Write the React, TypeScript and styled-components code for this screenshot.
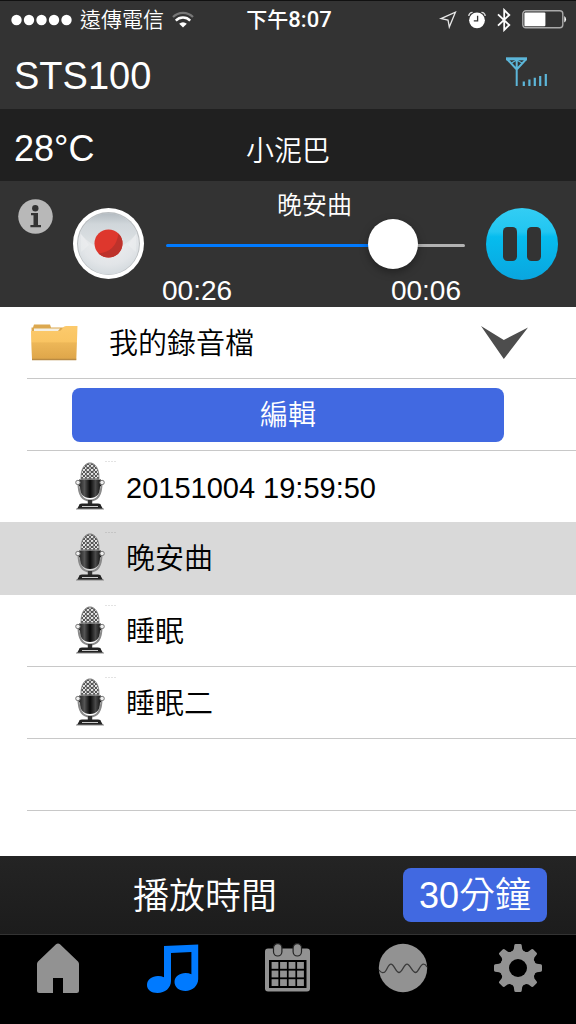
import React, { useState } from 'react';
import styled, { createGlobalStyle } from 'styled-components';

const GlobalStyle = createGlobalStyle`
  * { box-sizing: border-box; }
  body { margin: 0; background: #fff; }
  body, button, input {
    font-family: "Liberation Sans", "Noto Sans CJK TC", sans-serif;
    font-weight: 350;
  }
  button { border: 0; padding: 0; background: none; color: inherit; cursor: pointer; }
  svg { display: block; flex: none; }
`;

const Page = styled.div`
  min-height: 100vh;
  display: flex;
  flex-direction: column;
  color: #fff;
`;

const StatusBar = styled.div`
  display: grid;
  grid-template-columns: 1fr auto 1fr;
  align-items: center;
  height: 38px;
  padding: 0 9px 0 11px;
  border-top: 1px solid #111;
  background: #333;
  font-size: 21px;
  line-height: 36px;
`;

const StatusGroup = styled.div<{ $end?: boolean }>`
  display: flex;
  align-items: center;
  justify-content: ${p => (p.$end ? 'flex-end' : 'flex-start')};
  gap: ${p => (p.$end ? 11 : 8)}px;
`;

const Clock = styled.time`
  font-weight: 500;
  b { font-family: Roboto, sans-serif; font-weight: 500; font-size: 22px; }
`;

const TitleBar = styled.header`
  display: flex;
  align-items: center;
  justify-content: space-between;
  height: 71px;
  padding: 0 28px 4px 14px;
  background: #333;
`;

const Title = styled.h1`
  margin: 0;
  padding-top: 8px;
  font-size: 38px;
  font-weight: 350;
  line-height: 44px;
`;

const InfoBar = styled.section`
  display: grid;
  grid-template-columns: 1fr auto 1fr;
  align-items: center;
  height: 72px;
  padding: 8px 14px 0;
  background: #202020;
`;

const Temperature = styled.span`
  font-size: 36px;
  line-height: 44px;
`;

const ProfileName = styled.span`
  padding-top: 6px;
  font-size: 28px;
  line-height: 44px;
`;

const Player = styled.section`
  display: flex;
  align-items: center;
  height: 126px;
  padding: 0 18px;
  background: #333;
`;

const InfoButton = styled.button`
  align-self: flex-start;
  margin: 18px 20px 0 0;
`;

const Progress = styled.div`
  flex: 1;
  height: 126px;
  margin: 0 21px 0 17px;
  display: flex;
  flex-direction: column;
  align-items: stretch;
`;

const TrackName = styled.label`
  height: 39px;
  padding: 6px 0 0 2px;
  font-size: 25px;
  line-height: 36px;
  text-align: center;
`;

const Seek = styled.input<{ $ratio: number }>`
  appearance: none;
  height: 50px;
  margin: 0 0 0 4px;
  background: transparent;
  &::-webkit-slider-runnable-track {
    height: 3px;
    border-radius: 2px;
    background: linear-gradient(#007aff, #007aff) left / ${p => p.$ratio * 100}% 100% no-repeat, #b2b2b2;
  }
  &::-webkit-slider-thumb {
    appearance: none;
    width: 50px;
    height: 50px;
    margin-top: -25px;
    border-radius: 50%;
    background: #fff;
    box-shadow: 0 3px 8px rgba(0, 0, 0, 0.35);
  }
`;

const Times = styled.div`
  display: flex;
  justify-content: space-between;
  padding: 5px 4px 0 0;
  font-size: 28px;
  line-height: 32px;
`;

const Content = styled.main`
  flex: 1;
  background: #fff;
  color: #000;
  padding-bottom: 45px;
`;

const List = styled.ul`
  margin: 0;
  padding: 0;
  list-style: none;
`;

const Row = styled.li<{ $selected?: boolean }>`
  padding-left: 27px;
  height: ${p => (p.$selected ? 73 : 72)}px;
  margin-top: ${p => (p.$selected ? -1 : 0)}px;
  position: relative;
  background: ${p => (p.$selected ? '#d9d9d9' : 'transparent')};
  > * { border-bottom: 1px solid ${p => (p.$selected ? 'transparent' : '#c8c8c8')}; }
`;

const FolderButton = styled.button`
  display: flex;
  align-items: center;
  width: 100%;
  height: 72px;
  padding: 0 48px 0 3px;
  font-size: 29px;
  line-height: 40px;
  text-align: left;
`;

const FolderName = styled.span`
  flex: 1;
  margin-left: 30px;
  padding-top: 2px;
`;

const ActionCell = styled.div`
  display: flex;
  align-items: center;
  height: 72px;
  padding: 0 72px 0 45px;
`;

const BlueButton = styled.button<{ $large?: boolean }>`
  height: 54px;
  width: ${p => (p.$large ? '144px' : '100%')};
  padding-top: 2px;
  border-radius: 8px;
  background: #4169e1;
  color: #fff;
  font-size: ${p => (p.$large ? 36 : 28)}px;
  line-height: 52px;
`;

const RecordingButton = styled.button`
  display: flex;
  align-items: center;
  gap: 9px;
  width: 100%;
  height: 100%;
  padding-left: 48px;
  font-size: 29px;
  line-height: 40px;
  text-align: left;
`;

const RecordingName = styled.span`
  padding-top: 2px;
`;

const TimerBar = styled.section`
  display: flex;
  align-items: center;
  justify-content: space-between;
  height: 79px;
  padding: 0 29px 0 133px;
  background: linear-gradient(#242424, #1c1c1c);
  border-bottom: 1px solid #333;
  font-size: 36px;
  line-height: 54px;
`;

const TimerLabel = styled.span`
  padding-top: 4px;
`;

const TabBar = styled.nav`
  display: grid;
  grid-template-columns: repeat(5, 1fr);
  height: 89px;
  background: #000;
`;

const Tab = styled.button<{ $active?: boolean }>`
  display: flex;
  justify-content: center;
  padding-top: 8px;
  color: ${p => (p.$active ? '#007aff' : '#929292')};
`;

const SignalDots = () => (
  <svg width="61" height="12" viewBox="0 0 61 12" fill="#fff">
    {[0, 1, 2, 3, 4].map(i => <circle key={i} cx={5.5 + i * 12.5} cy="6" r="5.2" />)}
  </svg>
);

const Wifi = () => (
  <svg width="22" height="17" viewBox="0 0 22 17" fill="none" stroke="#fff" strokeWidth="2.4">
    <path d="M1 6 A14 14 0 0 1 21 6" stroke="#777" strokeWidth="2.2" />
    <path d="M3.8 9.6 A10 10 0 0 1 18.2 9.6" />
    <path d="M11 16.5 L7.2 12.8 A5.4 5.4 0 0 1 14.8 12.8 Z" fill="#fff" stroke="none" />
  </svg>
);

const LocationArrow = () => (
  <svg width="18" height="18" viewBox="0 0 18 18" fill="none" stroke="#e8e8e8" strokeWidth="1.3" strokeLinejoin="miter">
    <path d="M16.4 1.2 L10.3 16 L9 9 L2 7.6 Z" />
  </svg>
);

const Alarm = () => (
  <svg width="18" height="18" viewBox="0 0 18 18">
    <path d="M.8 5 A4 4 0 0 1 4.6 1.4 M17.2 5 A4 4 0 0 0 13.4 1.4" stroke="#ddd" strokeWidth="1.4" fill="none" />
    <circle cx="9" cy="9.3" r="7.9" fill="#fff" />
    <path d="M9.6 4.8 V9.8 H5.8" stroke="#333" strokeWidth="1.3" fill="none" />
  </svg>
);

const Bluetooth = () => (
  <svg width="14" height="24" viewBox="0 0 14 24" fill="none" stroke="#fff" strokeWidth="1.8">
    <path d="M1 6.3 L12.3 17 L7.2 22 V2 L12.3 7 L1 17.7" />
  </svg>
);

const Battery = () => (
  <svg width="45" height="19" viewBox="0 0 45 19">
    <rect x=".8" y=".8" width="40" height="17" rx="3" fill="none" stroke="#aaa" strokeWidth="1.4" />
    <rect x="2.4" y="2.6" width="21" height="13.6" rx="1" fill="#fff" />
    <path d="M42.3 6 A4 4 0 0 1 42.3 12.6 Z" fill="#fff" />
  </svg>
);

const Antenna = () => (
  <svg width="42" height="30" viewBox="0 0 42 30" fill="none" stroke="#5cb6d9">
    <path d="M0 1.8 H21" strokeWidth="3" />
    <path d="M1 2 L10.7 12.5 L20.3 2 M10.7 2 V29" strokeWidth="2" />
    <path d="M5.5 6 L10.7 3 L16 6" strokeWidth="1.2" />
    <path d="M17.8 29 V24.5 M23.4 29 V22.5 M28.8 29 V20.8 M34.2 29 V19 M39.8 29 V17" strokeWidth="2.2" />
  </svg>
);

const InfoIcon = () => (
  <svg width="35" height="35" viewBox="0 0 35 35">
    <circle cx="17.5" cy="17.5" r="17.3" fill="#b8b8b8" />
    <circle cx="17.3" cy="9.3" r="3.2" fill="#333" />
    <path d="M13 14 H20 V26 H23 V28.2 H12.4 V26 H15.5 V16.2 H13 Z" fill="#333" />
  </svg>
);

const RecordIcon = () => (
  <svg width="72" height="72" viewBox="0 0 72 72">
    <defs>
      <linearGradient id="recTop" x1="0" y1="0" x2="0" y2="1">
        <stop offset="0" stopColor="#b4bcc2" />
        <stop offset=".3" stopColor="#d0d6da" />
        <stop offset="1" stopColor="#e0e4e6" />
      </linearGradient>
      <radialGradient id="recBottom" cx=".5" cy=".35" r=".65">
        <stop offset="0" stopColor="#f2f2f2" />
        <stop offset=".75" stopColor="#e2e5e8" />
        <stop offset="1" stopColor="#d4dade" />
      </radialGradient>
    </defs>
    <circle cx="35.5" cy="35.5" r="35.5" fill="#fff" />
    <circle cx="35.5" cy="35.5" r="31.5" fill="#b9bdc0" />
    <circle cx="35.5" cy="36" r="30.5" fill="url(#recBottom)" />
    <path d="M7 25 A30.5 30.5 0 0 1 64 25 Q51 41 35.5 41 Q20 41 7 25 Z" fill="url(#recTop)" />
    <path d="M8 26 L16 37 L8 44 M63 26 L55 37 L63 44" fill="#fff" opacity=".2" />
    <circle cx="35.5" cy="35.5" r="14" fill="#de372d" />
    <path d="M45.4 25.6 A14 14 0 1 1 25.6 45.4 Q43 44 45.4 25.6 Z" fill="#bd322b" />
  </svg>
);

const PauseIcon = () => (
  <svg width="72" height="72" viewBox="0 0 72 72">
    <defs>
      <linearGradient id="pauseFill" x1="0" y1="0" x2="0" y2="1">
        <stop offset="0" stopColor="#33cdf4" />
        <stop offset=".33" stopColor="#22c6f1" />
        <stop offset=".4" stopColor="#06bcee" />
        <stop offset="1" stopColor="#0aa6df" />
      </linearGradient>
    </defs>
    <circle cx="36" cy="36" r="36" fill="url(#pauseFill)" />
    <rect x="17" y="19" width="14" height="34" rx="4.5" fill="#333" />
    <rect x="41" y="19" width="14" height="34" rx="4.5" fill="#333" />
  </svg>
);

const FolderIcon = () => (
  <svg width="49" height="38" viewBox="0 0 49 38">
    <defs>
      <linearGradient id="folderFill" x1="0" y1="0" x2="0" y2="1">
        <stop offset="0" stopColor="#fcca6c" />
        <stop offset=".48" stopColor="#f9c462" />
        <stop offset=".5" stopColor="#edb758" />
        <stop offset="1" stopColor="#dea549" />
      </linearGradient>
    </defs>
    <path d="M1.5 3.5 H3 L4 .5 H20 L21 3.5 H46 V34 H2 Z" fill="#dca84f" />
    <path d="M4 4.5 H30 L28 7 H4 Z" fill="#f4efe3" />
    <path d="M1 7 H29 Q31 7 32 5 L33 3.5 Q34 2 36 2 H47.5 L46.3 35.5 H2 Z" fill="url(#folderFill)" />
    <path d="M2 35.5 H46.3" stroke="#b98a43" strokeWidth="1.6" />
  </svg>
);

const Chevron = () => (
  <svg width="47" height="34" viewBox="0 0 47 34" fill="#4d4d4d">
    <path d="M0 0 L22.8 14 L47 1.5 L22.8 33 Z" />
  </svg>
);

const MicIcon = () => (
  <svg width="42" height="52" viewBox="0 0 42 52">
    <defs>
      <linearGradient id="micBody" x1="0" y1="0" x2="1" y2="0">
        <stop offset="0" stopColor="#222" />
        <stop offset=".25" stopColor="#555" />
        <stop offset=".5" stopColor="#080808" />
        <stop offset=".75" stopColor="#4a4a4a" />
        <stop offset="1" stopColor="#111" />
      </linearGradient>
      <pattern id="micMesh" width="4" height="4" patternUnits="userSpaceOnUse">
        <rect width="4" height="4" fill="#555" />
        <circle cx="1" cy="1" r="1.1" fill="#f2f2f2" />
        <circle cx="3" cy="3" r="1.1" fill="#f2f2f2" />
      </pattern>
    </defs>
    <path d="M30 .5 H41" stroke="#777" strokeWidth="1" strokeDasharray="2 1" opacity=".2" />
    <path d="M3.5 22 C3.5 34 7 39.5 15 39.5 C23 39.5 26.5 34 26.5 22" fill="none" stroke="#8a8a8a" strokeWidth="2" />
    <path d="M6 18 C5 -3.5 25 -3.5 24 18 Z" fill="url(#micMesh)" stroke="#777" strokeWidth=".8" />
    <path d="M11.5 3 V17 M15 2 V17 M18.5 3 V17" stroke="#777" strokeWidth=".7" />
    <path d="M4 18.5 H26 V25 L25 25.5 C25 33 22 37 15 37 C8 37 5 33 5 25.5 L4 25 Z" fill="url(#micBody)" />
    <path d="M6.5 18 H23.5" stroke="#777" strokeWidth="1.6" strokeDasharray="2 1" />
    <circle cx="2.9" cy="21.5" r="2.2" fill="#eee" stroke="#777" />
    <circle cx="27.1" cy="21.5" r="2.2" fill="#eee" stroke="#777" />
    <rect x="12.8" y="39" width="4.4" height="4.5" fill="#333" />
    <path d="M4 44.5 Q4 42.5 7 42.5 H23 Q26 42.5 26 44.5 L28 48 H2 Z" fill="#222" />
    <path d="M7 45.5 H23" stroke="#ccc" strokeWidth="1" />
    <path d="M1 48 H29" stroke="#888" strokeWidth="1" />
  </svg>
);

const HomeIcon = () => (
  <svg width="44" height="50" viewBox="0 0 44 50" fill="currentColor">
    <path d="M20 1.2 Q22 -.2 24 1.2 L42 18.5 Q43 19.5 43 21 V47.5 Q43 50 40.5 50 H27 V35 H17 V50 H3.5 Q1 50 1 47.5 V21 Q1 19.5 2 18.5 Z" />
  </svg>
);

const MusicIcon = () => (
  <svg width="52" height="51" viewBox="0 0 52 51" fill="currentColor">
    <path d="M17 3 L51.2 1.5 V36 C51.2 43 45 48 38.5 48 C32 48 27.5 44 27.5 39 C27.5 33.5 32.5 30 38.5 30 Q41.8 30 44.4 31.3 V9 L24 10 V38 C24 45 18 50 10.5 50 C4 50 0 46.5 0 42 C0 36.5 5 33 11 33 Q14.3 33 17 34.2 Z" />
  </svg>
);

const CalendarIcon = () => (
  <svg width="45" height="50" viewBox="0 0 45 50" fill="currentColor">
    <rect y="5.5" width="45" height="43" rx="3" />
    <rect x="4" y="17" width="37.5" height="28" fill="#000" />
    {[0, 1, 2].map(r => [0, 1, 2, 3].map(c => (
      <rect key={`${r}-${c}`} x={6.6 + c * 8.5} y={19 + r * 8.6} width="6.8" height="6.8" />
    )))}
    {[12.7, 32.3].map(x => (
      <rect key={x} x={x - 4.2} y=".6" width="8.4" height="12.4" rx="4.2" stroke="#222" strokeWidth="1.2" />
    ))}
  </svg>
);

const WaveIcon = () => (
  <svg width="50" height="50" viewBox="0 0 50 50">
    <circle cx="25" cy="25" r="24.2" fill="currentColor" />
    <path d="M1 27 C3 30 6 31 8 27.5 C10.5 23 11 21.2 13 21.2 C16 21.2 18 29.5 21 29.5 C24 29.5 26 21.2 29 21.2 C32 21.2 34.5 29.5 37.5 29.5 C40.5 29.5 42 21.2 45.5 21.2 Q47.5 21.2 49 24" fill="none" stroke="#3a3a3a" strokeWidth="1.3" />
  </svg>
);

const GearIcon = () => (
  <svg width="50" height="50" viewBox="0 0 50 50" fill="currentColor">
    {[0, 45, 90, 135, 180, 225, 270, 315].map(a => (
      <path key={a} transform={`rotate(${a} 25 25)`} d="M21.3 2.2 Q21.5 1 22.7 1 H27.3 Q28.5 1 28.7 2.2 L29.2 6 Q29.8 8.2 32.5 9 V14 H17.5 V9 Q20.2 8.2 20.8 6 Z" />
    ))}
    <circle cx="25" cy="25" r="17.3" />
    <circle cx="25" cy="25" r="9" fill="#000" />
  </svg>
);

const recordings = ['20151004 19:59:50', '晚安曲', '睡眠', '睡眠二'];

const tabs = [
  { name: '首頁', Icon: HomeIcon },
  { name: '音樂', Icon: MusicIcon },
  { name: '日曆', Icon: CalendarIcon },
  { name: '波形', Icon: WaveIcon },
  { name: '設定', Icon: GearIcon },
];

const DURATION = 32;
const clock = (s: number) => `00:${String(s).padStart(2, '0')}`;

export default function App() {
  const [elapsed, setElapsed] = useState(26);
  const [selected, setSelected] = useState(1);
  const [tab, setTab] = useState(1);

  return (
    <Page>
      <GlobalStyle />
      <StatusBar>
        <StatusGroup>
          <SignalDots />
          <span>遠傳電信</span>
          <Wifi />
        </StatusGroup>
        <Clock>下午<b>8:07</b></Clock>
        <StatusGroup $end>
          <LocationArrow />
          <Alarm />
          <Bluetooth />
          <Battery />
        </StatusGroup>
      </StatusBar>
      <TitleBar>
        <Title>STS100</Title>
        <Antenna />
      </TitleBar>
      <InfoBar>
        <Temperature>28°C</Temperature>
        <ProfileName>小泥巴</ProfileName>
      </InfoBar>
      <Player>
        <InfoButton aria-label="資訊"><InfoIcon /></InfoButton>
        <button aria-label="錄音"><RecordIcon /></button>
        <Progress>
          <TrackName htmlFor="seek">{recordings[selected]}</TrackName>
          <Seek
            id="seek"
            type="range"
            min={0}
            max={DURATION}
            value={elapsed}
            $ratio={elapsed / DURATION}
            onChange={e => setElapsed(Number(e.target.value))}
          />
          <Times>
            <span>{clock(elapsed)}</span>
            <span>{clock(DURATION - elapsed)}</span>
          </Times>
        </Progress>
        <button aria-label="暫停"><PauseIcon /></button>
      </Player>
      <Content>
        <List>
          <Row>
            <FolderButton aria-expanded="true">
              <FolderIcon />
              <FolderName>我的錄音檔</FolderName>
              <Chevron />
            </FolderButton>
          </Row>
          <Row>
            <ActionCell><BlueButton>編輯</BlueButton></ActionCell>
          </Row>
          {recordings.map((name, i) => (
            <Row key={name} $selected={i === selected}>
              <RecordingButton onClick={() => setSelected(i)}>
                <MicIcon />
                <RecordingName>{name}</RecordingName>
              </RecordingButton>
            </Row>
          ))}
          <Row><RecordingButton as="div" /></Row>
        </List>
      </Content>
      <TimerBar>
        <TimerLabel>播放時間</TimerLabel>
        <BlueButton $large>30分鐘</BlueButton>
      </TimerBar>
      <TabBar>
        {tabs.map(({ name, Icon }, i) => (
          <Tab key={name} aria-label={name} $active={i === tab} onClick={() => setTab(i)}>
            <Icon />
          </Tab>
        ))}
      </TabBar>
    </Page>
  );
}
